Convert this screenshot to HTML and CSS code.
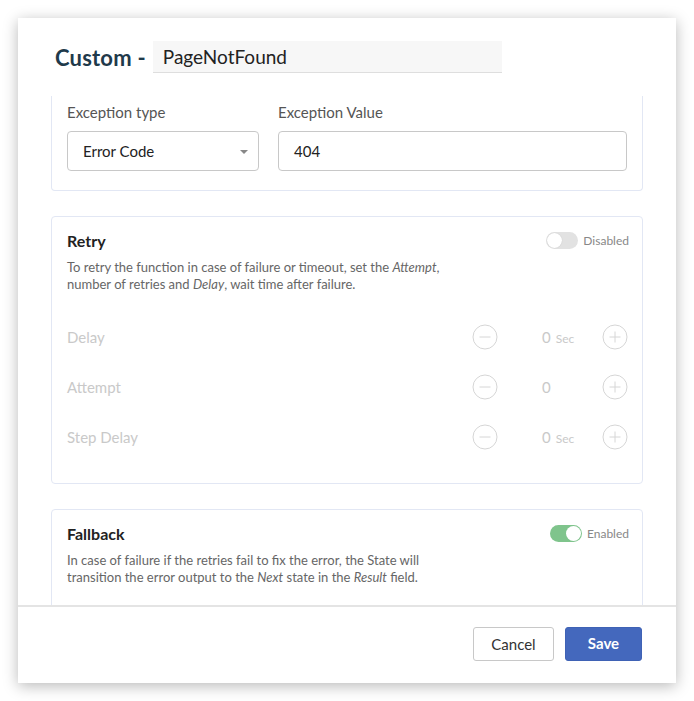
FILE: index.html
```html
<!DOCTYPE html>
<html>
<head>
<meta charset="utf-8">
<link rel="stylesheet" href="styles.css">
</head>
<body>
<div class="dialog">
  <div class="header">
    <span class="title">Custom -</span>
    <div class="name-input">PageNotFound</div>
  </div>
  <div class="body">
    <div class="card card-exception">
      <div class="field field-type">
        <div class="label">Exception type</div>
        <div class="select">Error Code<span class="caret"></span></div>
      </div>
      <div class="field field-value">
        <div class="label">Exception Value</div>
        <div class="input">404</div>
      </div>
    </div>

    <div class="card card-retry">
      <div class="card-head">
        <span class="card-title">Retry</span>
        <span class="toggle-wrap"><span class="toggle off"><span class="knob"></span></span><span class="toggle-text">Disabled</span></span>
      </div>
      <p class="desc">To retry the function in case of failure or timeout, set the <i>Attempt</i>,<br>number of retries and <i>Delay</i>, wait time after failure.</p>
      <div class="rows">
        <div class="row">
          <span class="row-label">Delay</span>
          <span class="circle"><svg width="26" height="26" viewBox="0 0 26 26"><circle cx="13" cy="13" r="12" fill="none" stroke="#d6d6d6" stroke-width="1"/><path d="M7.5 13h11" stroke="#d6d6d6" stroke-width="1"/></svg></span>
          <span class="value">0<span class="unit">Sec</span></span>
          <span class="circle"><svg width="26" height="26" viewBox="0 0 26 26"><circle cx="13" cy="13" r="12" fill="none" stroke="#d6d6d6" stroke-width="1"/><path d="M7.5 13h11M13 7.5v11" stroke="#d6d6d6" stroke-width="1"/></svg></span>
        </div>
        <div class="row">
          <span class="row-label">Attempt</span>
          <span class="circle"><svg width="26" height="26" viewBox="0 0 26 26"><circle cx="13" cy="13" r="12" fill="none" stroke="#d6d6d6" stroke-width="1"/><path d="M7.5 13h11" stroke="#d6d6d6" stroke-width="1"/></svg></span>
          <span class="value">0</span>
          <span class="circle"><svg width="26" height="26" viewBox="0 0 26 26"><circle cx="13" cy="13" r="12" fill="none" stroke="#d6d6d6" stroke-width="1"/><path d="M7.5 13h11M13 7.5v11" stroke="#d6d6d6" stroke-width="1"/></svg></span>
        </div>
        <div class="row">
          <span class="row-label">Step Delay</span>
          <span class="circle"><svg width="26" height="26" viewBox="0 0 26 26"><circle cx="13" cy="13" r="12" fill="none" stroke="#d6d6d6" stroke-width="1"/><path d="M7.5 13h11" stroke="#d6d6d6" stroke-width="1"/></svg></span>
          <span class="value">0<span class="unit">Sec</span></span>
          <span class="circle"><svg width="26" height="26" viewBox="0 0 26 26"><circle cx="13" cy="13" r="12" fill="none" stroke="#d6d6d6" stroke-width="1"/><path d="M7.5 13h11M13 7.5v11" stroke="#d6d6d6" stroke-width="1"/></svg></span>
        </div>
      </div>
    </div>

    <div class="card card-fallback">
      <div class="card-head">
        <span class="card-title">Fallback</span>
        <span class="toggle-wrap"><span class="toggle on"><span class="knob"></span></span><span class="toggle-text">Enabled</span></span>
      </div>
      <p class="desc">In case of failure if the retries fail to fix the error, the State will<br>transition the error output to the <i>Next</i> state in the <i>Result</i> field.</p>
    </div>
  </div>
  <div class="footer">
    <button class="btn btn-cancel">Cancel</button>
    <button class="btn btn-save">Save</button>
  </div>
</div>
</body>
</html>
```

FILE: styles.css
```css
* { box-sizing: border-box; }
html, body { margin: 0; padding: 0; background: #fff; }
body {
  font-family: "Lato", "Open Sans", sans-serif;
  color: #333;
  padding: 18px;
}
.dialog {
  width: 658px;
  height: 665px;
  background: #fff;
  box-shadow: 0 3px 14px rgba(0, 0, 0, 0.28);
  display: flex;
  flex-direction: column;
}
.header {
  height: 78px;
  flex: none;
  display: flex;
  align-items: center;
  padding-left: 37px;
}
.title {
  font-size: 22px;
  font-weight: 700;
  color: #1f3a4b;
  margin-right: 7px;
  letter-spacing: 0.2px;
}
.name-input {
  width: 349px;
  height: 32px;
  background: #f7f7f7;
  border-bottom: 1px solid #dedede;
  font-size: 19px;
  color: #222;
  padding-left: 10px;
  display: flex;
  align-items: center;
}
.body {
  height: 509px;
  flex: none;
  overflow: hidden;
  padding: 0 33px;
}
.card {
  border: 1px solid #e2e7f4;
  border-radius: 4px;
  padding: 0 14px 0 15px;
  margin-bottom: 25px;
}
.card-exception {
  border-top: none;
  border-radius: 0 0 4px 4px;
  display: flex;
  gap: 19px;
  padding: 7px 15px 19px 15px;
}
.field-type { width: 192px; }
.field-value { flex: 1; }
.label {
  font-size: 15px;
  color: #555;
  line-height: 18px;
  margin-bottom: 10px;
}
.select, .input {
  height: 40px;
  border: 1px solid #c8c8c8;
  border-radius: 4px;
  font-size: 15px;
  color: #222;
  display: flex;
  align-items: center;
  padding-left: 15px;
  padding-bottom: 1px;
}
.select { position: relative; }
.caret {
  position: absolute;
  right: 10px;
  top: 18px;
  width: 0;
  height: 0;
  border-left: 4px solid transparent;
  border-right: 4px solid transparent;
  border-top: 4px solid #888;
}
.card-retry { padding-top: 13px; padding-bottom: 21px; }
.card-fallback { padding-top: 13px; padding-bottom: 40px; }
.card-head {
  display: flex;
  align-items: center;
  justify-content: space-between;
  height: 20px;
}
.card-title {
  font-size: 16px;
  font-weight: 700;
  color: #222;
}
.toggle-wrap {
  display: flex;
  align-items: center;
  margin-right: -1px;
}
.toggle {
  width: 32px;
  height: 17px;
  border-radius: 9px;
  display: flex;
  align-items: center;
  padding: 0 1px;
}
.toggle.off { background: #e2e2e2; justify-content: flex-start; }
.toggle.on { background: #7fc48c; justify-content: flex-end; }
.knob {
  width: 15px;
  height: 15px;
  border-radius: 50%;
  background: #fff;
}
.toggle.off .knob { box-shadow: 0 0 1px rgba(0,0,0,0.2); }
.toggle-text {
  font-size: 12px;
  color: #888;
  margin-left: 5px;
}
.desc {
  margin: 9px 0 0;
  font-size: 13px;
  line-height: 17px;
  color: #666;
}
.rows { margin-top: 19px; }
.row {
  height: 50px;
  display: flex;
  align-items: center;
}
.row-label {
  flex: 1;
  font-size: 15px;
  color: #c9c9c9;
}
.circle {
  width: 26px;
  height: 26px;
  display: flex;
}
.value {
  width: 104px;
  padding-left: 44px;
  font-size: 15px;
  color: #c9c9c9;
}
.unit {
  font-size: 12px;
  margin-left: 5px;
}
.footer {
  height: 78px;
  flex: none;
  border-top: 2px solid #e4e4e4;
  display: flex;
  align-items: center;
  justify-content: flex-end;
  padding-right: 34px;
  padding-bottom: 3px;
  gap: 11px;
}
.btn {
  font-family: "Lato", "Open Sans", sans-serif;
  height: 34px;
  border-radius: 3px;
  font-size: 15px;
  cursor: pointer;
}
.btn-cancel {
  width: 81px;
  background: #fff;
  border: 1px solid #c8c8c8;
  color: #333;
}
.btn-save {
  width: 77px;
  background: #4468bd;
  border: 1px solid #3f62b5;
  color: #fff;
  font-weight: 700;
  padding-bottom: 3px;
}
```
